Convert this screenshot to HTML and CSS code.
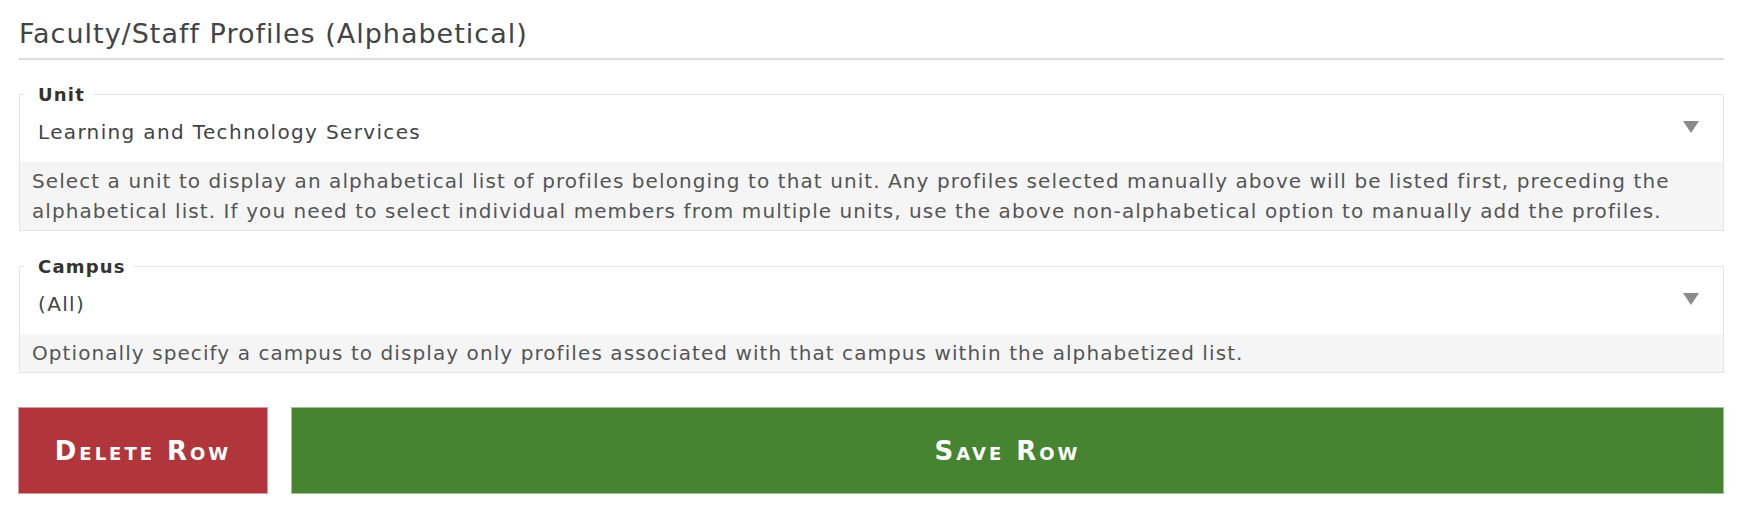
FILE: index.html
```html
<!DOCTYPE html>
<html lang="en">
<head>
<meta charset="utf-8">
<title>Faculty/Staff Profiles (Alphabetical)</title>
<link rel="stylesheet" href="styles.css">
</head>
<body>
<div class="panel">
  <h2 class="panel-title">Faculty/Staff Profiles (Alphabetical)</h2>

  <fieldset class="field">
    <legend class="field-label">Unit</legend>
    <div class="select">
      <span class="select-value">Learning and Technology Services</span>
      <span class="select-arrow"></span>
    </div>
    <div class="field-help">Select a unit to display an alphabetical list of profiles belonging to that unit. Any profiles selected manually above will be listed first, preceding the alphabetical list. If you need to select individual members from multiple units, use the above non-alphabetical option to manually add the profiles.</div>
  </fieldset>

  <fieldset class="field">
    <legend class="field-label">Campus</legend>
    <div class="select">
      <span class="select-value">(All)</span>
      <span class="select-arrow"></span>
    </div>
    <div class="field-help">Optionally specify a campus to display only profiles associated with that campus within the alphabetized list.</div>
  </fieldset>

  <div class="actions">
    <button class="btn btn-delete" type="button">Delete Row</button>
    <button class="btn btn-save" type="button">Save Row</button>
  </div>
</div>
</body>
</html>
```
FILE: styles.css
```css
html, body {
  margin: 0;
  padding: 0;
  background: #ffffff;
}

body {
  font-family: "DejaVu Sans", "Liberation Sans", sans-serif;
  color: #444444;
}

.panel {
  padding: 0 13px 0 19px;
}

.panel-title {
  margin: 0;
  padding-top: 17px;
  padding-bottom: 7px;
  font-size: 27px;
  font-weight: normal;
  line-height: 34px;
  letter-spacing: 1px;
  color: #444444;
  border-bottom: 2px solid #dddddd;
}

.field {
  margin: 24px 0 0 0;
  padding: 0;
  border: 1px solid #e4e4e4;
  min-width: 0;
}

.field + .field {
  margin-top: 25px;
}

.field-label {
  margin-left: 4px;
  padding: 0 8px 0 14px;
  font-size: 18px;
  font-weight: bold;
  letter-spacing: 1.2px;
  color: #333333;
}

.select {
  display: flex;
  align-items: center;
  justify-content: space-between;
  height: 57px;
  padding: 0 24px 0 18px;
}

.select-value {
  font-size: 20px;
  letter-spacing: 1.35px;
  color: #444444;
  padding-bottom: 3px;
}

.select-arrow {
  width: 0;
  height: 0;
  border-left: 8.5px solid transparent;
  border-right: 8.5px solid transparent;
  border-top: 12px solid #8a8a8a;
  margin-bottom: 13px;
}

.field-help {
  background: #f5f5f5;
  padding: 4px 12px 4px 12px;
  font-size: 20px;
  line-height: 30px;
  letter-spacing: 1.08px;
  color: #555555;
}

.actions {
  display: flex;
  gap: 23px;
  margin-top: 34px;
  margin-left: -1px;
}

.btn {
  height: 87px;
  border: 1px solid rgba(255, 255, 255, 0.5);
  font-family: "DejaVu Sans", "Liberation Sans", sans-serif;
  font-size: 26px;
  font-weight: bold;
  font-variant: small-caps;
  letter-spacing: 3px;
  color: #ffffff;
  cursor: pointer;
}

.btn-delete {
  width: 250px;
  flex: none;
  background: #b0363b;
}

.btn-save {
  flex: 1;
  background: #478431;
}
```
